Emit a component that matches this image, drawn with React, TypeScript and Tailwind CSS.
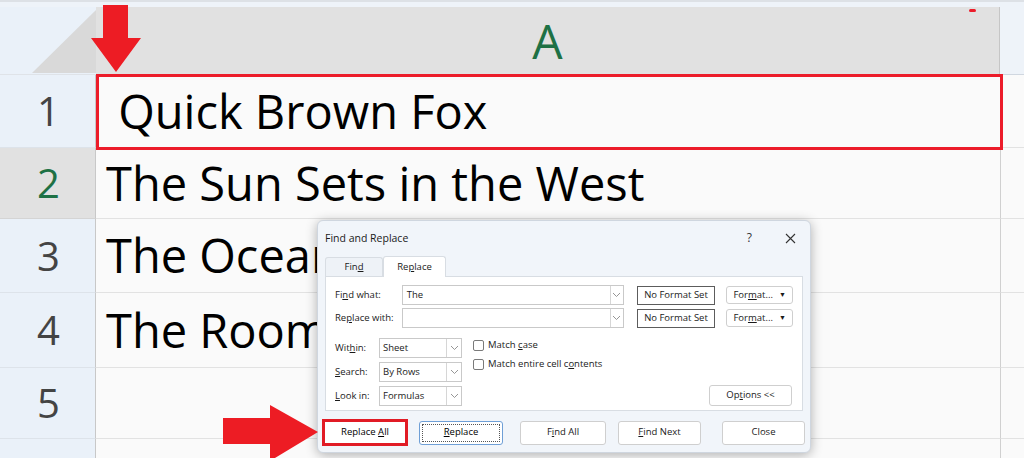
import React from "react";

const SHEET = { fontFamily: '"Open Sans", "Noto Sans", sans-serif' };
const UI = { fontFamily: '"Open Sans", "Noto Sans", sans-serif' };

function U({ children }: { children: React.ReactNode }) {
  return <span className="underline underline-offset-[1px]">{children}</span>;
}

function Chevron() {
  return (
    <svg width="9" height="6" viewBox="0 0 9 6" className="block">
      <path d="M1 1 L4.5 4.5 L8 1" fill="none" stroke="#8a8a8a" strokeWidth="0.9" />
    </svg>
  );
}

function Select({ value, w }: { value: string; w: string }) {
  return (
    <div className={`flex h-[20px] ${w} items-stretch border border-[#c9c9c9] bg-white`}>
      <div className="flex flex-1 items-center pl-[3px] text-[#1a1a1a]">{value}</div>
      <div className="flex w-[15px] items-center justify-center border-l border-[#d6d6d6]">
        <Chevron />
      </div>
    </div>
  );
}

function Btn({
  children,
  className = "",
}: {
  children: React.ReactNode;
  className?: string;
}) {
  return (
    <div
      className={`flex items-center justify-center rounded-[3px] border border-[#cfcfcf] bg-white text-[#1a1a1a] ${className}`}
    >
      {children}
    </div>
  );
}

function Row({
  n,
  h,
  text,
  active,
}: {
  n?: number;
  h: string;
  text?: string;
  active?: boolean;
}) {
  return (
    <div className={`flex ${h} shrink-0`}>
      <div
        className={`flex w-[96px] shrink-0 items-center justify-center border-r border-b border-r-[#c8c8c8] ${
          active
            ? "border-b-[#d4d4d4] bg-[#e1e1e1] text-[#1e7145]"
            : "border-b-[#dde3ea] bg-[#eaf1f9] text-[#444444]"
        }`}
      >
        {n !== undefined && <span className="pl-[2px] text-[40px] leading-none">{n}</span>}
      </div>
      <div className="flex w-[904px] shrink-0 items-center border-b border-[#e2e2e2] bg-[#fafafa]">
        {text && (
          <span className="whitespace-pre pl-[10px] text-[47px] leading-none text-black">
            {text}
          </span>
        )}
      </div>
      <div className="flex-1 border-b border-l border-[#e2e2e2] border-l-[#d0d0d0] bg-[#fafafa]" />
    </div>
  );
}

export default function App() {
  return (
    <div className="relative h-[458px] w-[1024px] overflow-hidden bg-[#fafafa]" style={SHEET}>
      {/* top strip */}
      <div className="h-[7px] border-t-2 border-[#dde1e6] bg-[#eef3f9]" />
      {/* column header row */}
      <div className="flex h-[68px]">
        <div className="relative w-[96px] shrink-0 border-b border-[#dfe3e8] bg-[#eaf1f9]">
          <svg width="96" height="68" className="absolute left-0 top-0">
            <polygon points="32,66 96,66 96,3" fill="#d9d9d9" />
          </svg>
        </div>
        <div className="flex w-[904px] shrink-0 items-center justify-center border-r border-[#c6c6c6] bg-[#e1e1e1]">
          <span className="text-[48px] leading-none text-[#1e7145]">A</span>
        </div>
        <div className="flex-1 border-b border-[#d0d7e0] bg-[#eef3f9]" />
      </div>
      <Row n={1} h="h-[73px]" text=" Quick Brown Fox" />
      <Row n={2} h="h-[71px]" text="The Sun Sets in the West" active />
      <Row n={3} h="h-[74px]" text="The Ocean" />
      <Row n={4} h="h-[75px]" text="The Room" />
      <Row n={5} h="h-[71px]" />
      <Row h="h-[71px]" />

      {/* red highlight box around row 1 */}
      <div className="absolute left-[96px] top-[74px] h-[76px] w-[907px] border-[3px] border-[#ec1c2a]" />
      {/* red dot */}
      <div className="absolute left-[969px] top-[9px] h-[3px] w-[7px] rounded-full bg-[#ec1c2a]" />

      {/* top arrow */}
      <svg width="52" height="68" className="absolute left-[90px] top-[5px]">
        <polygon points="13,0 38,0 38,33 51,33 26,67 1,33 13,33" fill="#ed1c24" />
      </svg>

      {/* dialog */}
      <div
        className="absolute left-[317px] top-[220px] flex h-[233px] w-[494px] flex-col rounded-[6px] border border-[#cfd6df] bg-[#f1f5fa] text-[9.5px] shadow-[0_2px_12px_rgba(0,0,0,0.3)]"
        style={UI}
      >
        <div className="flex h-[34px] shrink-0 items-center pl-[7px] pr-[14px]">
          <span className="text-[10.5px] leading-none text-[#1a1a1a]">Find and Replace</span>
          <span className="ml-auto mr-[33px] text-[12px] leading-none text-[#333]">?</span>
          <svg width="11" height="11" viewBox="0 0 11 11">
            <path d="M1 1 L10 10 M10 1 L1 10" stroke="#333" strokeWidth="1.1" />
          </svg>
        </div>
        {/* tabs */}
        <div className="ml-[7px] flex h-[21px] shrink-0 items-end">
          <div className="flex h-[19px] w-[58px] items-center justify-center rounded-t-[3px] border border-b-0 border-[#d8dde3] bg-[#eef2f7] text-[#1a1a1a]">
            <span>
              Fin<U>d</U>
            </span>
          </div>
          <div className="relative -mb-px flex h-[21px] w-[63px] items-center justify-center rounded-t-[3px] border border-b-0 border-[#d8dde3] bg-white text-[#1a1a1a]">
            <span>
              Re<U>p</U>lace
            </span>
          </div>
        </div>
        {/* panel */}
        <div className="mx-[7px] flex h-[135px] shrink-0 flex-col border border-[#d8dde3] bg-white px-[9px] pt-[8px] text-[#1a1a1a]">
          <div className="flex h-[20px] items-center">
            <div className="w-[67px]">
              Fi<U>n</U>d what:
            </div>
            <div className="flex h-[20px] w-[223px] items-stretch border border-[#c9c9c9]">
              <div className="flex flex-1 items-center pl-[4px]">The</div>
              <div className="flex w-[13px] items-center justify-center border-l border-[#d6d6d6]">
                <Chevron />
              </div>
            </div>
            <div className="ml-[13px] flex h-[19px] w-[79px] items-center justify-center border border-[#5c5c5c]">
              No Format Set
            </div>
            <Btn className="ml-[11px] h-[18px] w-[67px] gap-[6px]">
              <span>
                For<U>m</U>at...
              </span>
              <span className="text-[7px]">▼</span>
            </Btn>
          </div>
          <div className="mt-[3px] flex h-[20px] items-center">
            <div className="w-[67px]">
              Re<U>p</U>lace with:
            </div>
            <div className="flex h-[20px] w-[223px] items-stretch border border-[#c9c9c9]">
              <div className="flex-1" />
              <div className="flex w-[13px] items-center justify-center border-l border-[#d6d6d6]">
                <Chevron />
              </div>
            </div>
            <div className="ml-[13px] flex h-[19px] w-[79px] items-center justify-center border border-[#5c5c5c]">
              No Format Set
            </div>
            <Btn className="ml-[11px] h-[18px] w-[67px] gap-[6px]">
              <span>
                For<U>m</U>at...
              </span>
              <span className="text-[7px]">▼</span>
            </Btn>
          </div>
          <div className="mt-[10px] flex">
            <div className="flex flex-col gap-[4px]">
              <div className="flex items-center">
                <div className="w-[44px]">
                  Wit<U>h</U>in:
                </div>
                <Select value="Sheet" w="w-[83px]" />
              </div>
              <div className="flex items-center">
                <div className="w-[44px]">
                  <U>S</U>earch:
                </div>
                <Select value="By Rows" w="w-[83px]" />
              </div>
              <div className="flex items-center">
                <div className="w-[44px]">
                  <U>L</U>ook in:
                </div>
                <Select value="Formulas" w="w-[83px]" />
              </div>
            </div>
            <div className="ml-[11px] flex flex-col gap-[8px] pt-[2px]">
              <div className="flex h-[11px] items-center gap-[4px]">
                <div className="h-[11px] w-[11px] rounded-[2px] border border-[#7a7a7a] bg-white" />
                <span>
                  Match <U>c</U>ase
                </span>
              </div>
              <div className="flex h-[11px] items-center gap-[4px]">
                <div className="h-[11px] w-[11px] rounded-[2px] border border-[#7a7a7a] bg-white" />
                <span>
                  Match entire cell c<U>o</U>ntents
                </span>
              </div>
            </div>
            <div className="ml-auto flex items-end pr-[1px]">
              <Btn className="h-[21px] w-[83px]">
                <span>
                  Op<U>t</U>ions &lt;&lt;
                </span>
              </Btn>
            </div>
          </div>
        </div>
        {/* bottom buttons */}
        <div className="mt-[8px] flex items-center pl-[4px]">
          <div className="flex h-[27px] w-[86px] items-center justify-center border-[3px] border-[#e11b25] bg-white">
            <span>
              Replace <U>A</U>ll
            </span>
          </div>
          <div className="ml-[11px] flex h-[24px] w-[84px] items-center justify-center rounded-[3px] border border-[#6f9fd6] bg-white p-[2px]">
            <div className="flex h-full w-full items-center justify-center border border-dotted border-[#555]">
              <span>
                <U>R</U>eplace
              </span>
            </div>
          </div>
          <Btn className="ml-[17px] h-[24px] w-[86px]">
            <span>
              F<U>i</U>nd All
            </span>
          </Btn>
          <Btn className="ml-[12px] h-[24px] w-[83px]">
            <span>
              <U>F</U>ind Next
            </span>
          </Btn>
          <Btn className="ml-[21px] h-[24px] w-[83px]">
            <span>Close</span>
          </Btn>
        </div>
      </div>

      {/* bottom arrow */}
      <svg width="100" height="60" className="absolute left-[222px] top-[405px]">
        <polygon points="1,13 48,13 48,0 96,27 48,56 48,39 1,39" fill="#ed1c24" />
      </svg>
    </div>
  );
}
